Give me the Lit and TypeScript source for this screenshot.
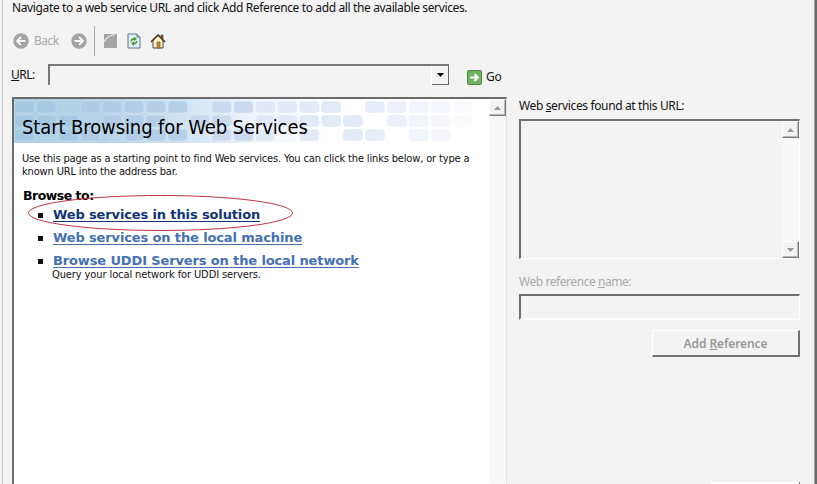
import { LitElement, html, svg, css } from "lit";
import { customElement } from "lit/decorators.js";

const ROWS: { y: number; cols: number[] }[] = [
  { y: 2, cols: [0, 1, 3, 4, 5, 6, 7, 9, 10, 11, 12, 13, 14, 16, 17, 18, 19, 20] },
  { y: 16, cols: [0, 1, 2, 4, 5, 6, 8, 9, 11, 12, 13, 14, 15, 17, 18, 19, 20] },
  { y: 30, cols: [0, 2, 3, 5, 6, 7, 9, 10, 11, 13, 15, 16, 18, 19] },
];

@customElement("app-root")
export class AppRoot extends LitElement {
  static styles = css`
    :host { display: block; width: 817px; height: 484px; overflow: hidden; box-sizing: border-box;
      background: #f3f3f3; color: #111; font: 12px/16px "Noto Sans", "Open Sans", sans-serif; }
    * { box-sizing: border-box; }
    .dialog { height: 484px; margin-left: 2px; border-left: 1px solid #c5c5c5; border-right: 2px solid #696969;
      box-shadow: inset -1px 0 #a5a5a5, inset 1px 0 #fafafa; padding-left: 9px; }
    .intro { height: 25px; white-space: nowrap; letter-spacing: -0.37px; }
    .toolbar { height: 31px; display: flex; align-items: center; }
    .toolbar svg { display: block; flex: none; }
    .back { width: 28px; margin: 0 9px 0 5px; color: #aaa; letter-spacing: -.5px; }
    .sep { width: 1px; height: 30px; background: #aaa; margin: 0 8px 0 7px; }
    .gap { margin-left: 8px; }
    .address { height: 41px; display: flex; padding-top: 7px; }
    .address label { width: 37px; margin-left: -1px; padding-top: 4px; letter-spacing: -.5px; }
    .combo { width: 401px; height: 21px; margin-top: 1px; border: 1px solid #777; border-width: 2px 0 0 2px;
      display: flex; justify-content: flex-end; }
    .drop { width: 17px; height: 19px; border: 1px solid #666; border-width: 0 1px 1px 0; box-shadow: -1px 0 #fff;
      display: grid; place-items: center; }
    .go { display: flex; align-items: center; height: 16px; margin: 6px 0 0 18px; gap: 4px; letter-spacing: -.3px; }
    .columns { display: flex; }
    .page { width: 495px; height: 387px; border: 2px solid #6b6b6b; border-width: 2px 1px 0 2px; border-right-color: #e6e6e6;
      background: #fff; display: flex; font-family: "DejaVu Sans Condensed", "DejaVu Sans", sans-serif; }
    .content { width: 475px; position: relative; }
    .banner { height: 44px; position: relative; background: linear-gradient(90deg, #acd0e5 0, #b6d4e9 90px, #cfe2f2 165px, #f1f6fc 245px, #fff 320px); }
    .tiles { position: absolute; left: 0; top: 0; }
    h1 { position: relative; margin: 0; padding: 14px 0 0 8px; font-size: 20px; line-height: 28px; font-weight: 400; letter-spacing: -.1px; color: #000; white-space: nowrap; }
    .lead { margin: 9px 0 0 8px; font-size: 11px; line-height: 13px; white-space: nowrap; letter-spacing: -.155px; }
    .browse { margin: 10px 0 0 9px; font: bold 12.5px/16px "DejaVu Sans", sans-serif; letter-spacing: -.5px; color: #000; }
    ul { list-style: none; margin: -1px 0 0; padding: 0 0 0 24px; }
    li { height: 23px; display: flex; align-items: center; font: bold 13px/23px "DejaVu Sans", sans-serif; letter-spacing: -.13px; white-space: nowrap; }
    li::before { content: ""; width: 5px; height: 5px; background: #111; margin: 2px 10px 0 0; }
    .link { color: #4470b4; text-decoration: underline; text-underline-offset: 2px; }
    .dark { color: #103478; }
    .note { margin: -4px 0 0 38px; font-size: 11px; line-height: 13px; white-space: nowrap; letter-spacing: -.1px; }
    .ring { position: absolute; left: 13px; top: 94px; }
    .scroll { width: 17px; background: repeating-conic-gradient(#f1f1f1 0 25%, #fff 0 50%) 0 0 / 2px 2px; display: flex; flex-direction: column; justify-content: space-between; }
    .arrow { width: 17px; height: 17px; background: #f3f3f3; border: 1px solid #fff; border-right-color: #777; border-bottom-color: #777;
      display: grid; place-items: center; box-shadow: inset -1px -1px #b8b8b8; }
    .side { width: 281px; margin-left: 12px; }
    .found { height: 22px; padding-top: 1px; letter-spacing: -.37px; white-space: nowrap; }
    .list { height: 140px; border: 2px solid #707070; border-color: #707070 #fff #fff #707070; border-right-width: 1px; border-bottom-width: 1px; display: flex; justify-content: flex-end; }
    .off { color: #aaa; }
    .name { margin-top: 14px; height: 21px; padding-top: 1px; letter-spacing: -.44px; }
    .field { height: 26px; border: 2px solid #707070; border-color: #707070 #fff #fff #707070; border-right-width: 1px; }
    .add { width: 148px; height: 27px; margin: 10px 0 0 133px; border: 1px solid #fff; border-right: 2px solid #707070; border-bottom: 2px solid #707070;
      text-align: center; line-height: 26px; color: #999; font-weight: 600; white-space: nowrap; letter-spacing: -.1px; }
    .next { width: 89px; height: 2px; margin: 125px 0 0 192px; background: #fff; border-right: 1px solid #777; }
  `;

  private arrow(down = false, color = "#999") {
    return html`<svg width="7" height="4" viewBox="0 0 7 4"><path d=${down ? "M0 0h7L3.5 4z" : "M0 4h7L3.5 0z"} fill=${color} /></svg>`;
  }

  private disc(left: boolean) {
    return html`<svg width="16" height="16" viewBox="0 0 16 16"><circle cx="8" cy="8" r="7.7" fill="#a3a3a3" />
      <path d=${left ? "M12.5 8H4M8 4L4 8l4 4" : "M3.5 8H12M8 4l4 4-4 4"} fill="none" stroke="#f8f8f8" stroke-width="1.8" /></svg>`;
  }

  private banner() {
    return svg`${ROWS.map((r) => r.cols.map((c) => svg`<rect x=${c * 21.9 + 0.5} y=${r.y} width="20" height="12" rx="4"
      fill=${c < 3 ? "#a2c6e2" : c < 8 ? "#adc9e6" : c < 11 ? "#c6d7ee" : "#dfe7f7"} stroke="#fff" stroke-opacity=".3" opacity=${c < 8 ? 0.7 : c < 16 ? 0.85 : Math.max(0.15, 0.75 - (c - 16) * 0.15)} />`))}`;
  }

  render() {
    return html`<div class="dialog">
      <div class="intro">Navigate to a web service URL and click Add Reference to add all the available services.</div>
      <div class="toolbar">
        <svg width="1" height="16"></svg>${this.disc(true)}<span class="back">Back</span>${this.disc(false)}
        <span class="sep"></span>
        <svg width="15" height="16" viewBox="0 0 15 16"><path d="M1 1h13v14H1z" fill="#a5a5a5" /><path d="M1.5 8.5C3 5 6 2.5 12 1.5" fill="none" stroke="#eee" stroke-width="1.1" /></svg>
        <svg class="gap" width="16" height="16" viewBox="0 0 16 16"><path d="M2 1h9l3 3v11H2z" fill="#e6f2fa" stroke="#5d7389" /><path d="M11 1v3h3" fill="#c4d5e2" stroke="#5d7389" />
          <path d="M4.5 8.5C4.5 6 6 5 8 5V3.5L11 6 8 8.3V7C6.8 7 6.3 7.3 6 8.5zM11.5 8c0 2.500-1.500 3.500-3.500 3.500V13L5 10.500 8 8.300v1.300c1.200 0 1.700-.3 2-1.600z" fill="#4c9d38" /></svg>
        <svg class="gap" width="16" height="16" viewBox="0 0 16 16"><path d="M11 2h2v4h-2z" fill="#a44a35" stroke="#543b2c" stroke-width=".6" /><path d="M3 7l5-5 5 5v8H3z" fill="#fff3c8" stroke="#4a4541" />
          <path d="M1 9l7-7 7 7" fill="none" stroke="#4d3a26" stroke-width="1.7" /><path d="M7 9h3v6H7z" fill="#c39042" stroke="#735326" stroke-width=".7" /></svg>
      </div>
      <div class="address"><label><u>U</u>RL:</label><div class="combo"><div class="drop">${this.arrow(true, "#000")}</div></div>
        <div class="go"><svg width="15" height="15" viewBox="0 0 15 15"><rect x=".5" y=".5" width="14" height="14" rx="1" fill="#6fb15f" stroke="#4c8744" /><path d="M3 7.5h8M7.500 4l3.500 3.500L7.500 11" fill="none" stroke="#fff" stroke-width="2" /></svg><span>Go</span></div></div>
      <div class="columns">
        <div class="page"><div class="content">
          <div class="banner"><svg class="tiles" width="475" height="44">${this.banner()}</svg><h1>Start Browsing for Web Services</h1></div>
          <div class="lead"><div>Use this page as a starting point to find Web services. You can click the links below, or type a</div><div>known URL into the address bar.</div></div>
          <div class="browse">Browse to:</div>
          <ul><li><span class="link dark">Web services in this solution</span></li><li><span class="link">Web services on the local machine</span></li><li><span class="link">Browse UDDI Servers on the local network</span></li></ul>
          <div class="note">Query your local network for UDDI servers.</div>
          <svg class="ring" width="268" height="40"><ellipse cx="133.500" cy="20" rx="132" ry="17.500" fill="none" stroke="#c03440" stroke-width="1" /></svg>
        </div><div class="scroll"><div class="arrow">${this.arrow()}</div></div></div>
        <div class="side">
          <div class="found">Web <u>s</u>ervices found at this URL:</div>
          <div class="list"><div class="scroll"><div class="arrow">${this.arrow()}</div><div class="arrow">${this.arrow(true)}</div></div></div>
          <div class="name off">Web reference <u>n</u>ame:</div><div class="field"></div>
          <div class="add">Add <u>R</u>eference</div><div class="next"></div>
        </div>
      </div>
    </div>`;
  }
}
